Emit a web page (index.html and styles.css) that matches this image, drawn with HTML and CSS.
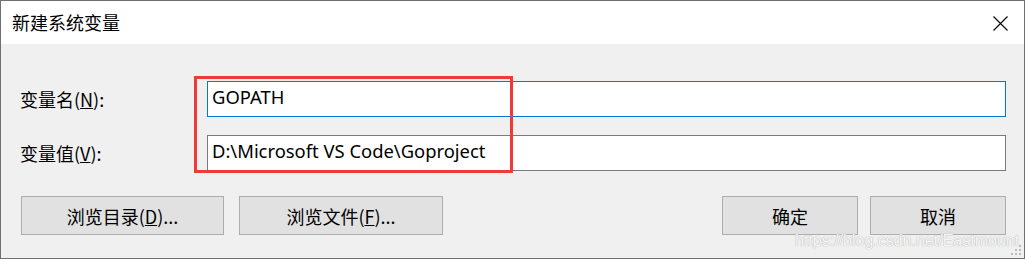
FILE: index.html
```html
<!DOCTYPE html>
<html lang="zh-CN">
<head>
    <meta charset="UTF-8">
    <title>新建系统变量</title>
    <link rel="stylesheet" href="styles.css">
</head>
<body>
    <div class="dialog">
        <div class="titlebar">
            <span class="titlebar__text">新建系统变量</span>
            <svg class="titlebar__close" width="15" height="15" viewBox="0 0 15 15">
                <path d="M0.5 0.5 L14.5 14.5 M14.5 0.5 L0.5 14.5" stroke="#000" stroke-width="1.1" fill="none"/>
            </svg>
        </div>
        <div class="content">
            <div class="form">
                <label class="form__label">变量名(<u>N</u>):</label>
                <div class="form__input form__input--focus">GOPATH</div>
                <label class="form__label">变量值(<u>V</u>):</label>
                <div class="form__input">D:\Microsoft VS Code\Goproject</div>
            </div>
            <div class="buttons">
                <button class="btn btn--wide">浏览目录(<u>D</u>)...</button>
                <button class="btn btn--wide btn--second">浏览文件(<u>F</u>)...</button>
                <button class="btn btn--ok">确定</button>
                <button class="btn btn--cancel">取消</button>
            </div>
        </div>
        <div class="highlight"></div>
        <div class="watermark">https://blog.csdn.net/Eastmount</div>
        <svg class="grip" width="11" height="11" viewBox="0 0 11 11">
            <rect x="8" y="0" width="2" height="2" fill="#bcbcbc"/>
            <rect x="4" y="4" width="2" height="2" fill="#bcbcbc"/>
            <rect x="8" y="4" width="2" height="2" fill="#bcbcbc"/>
            <rect x="0" y="8" width="2" height="2" fill="#bcbcbc"/>
            <rect x="4" y="8" width="2" height="2" fill="#bcbcbc"/>
            <rect x="8" y="8" width="2" height="2" fill="#bcbcbc"/>
        </svg>
    </div>
</body>
</html>
```

FILE: styles.css
```css
html,
body{
    margin: 0;
    padding: 0;
}
body{
    font-family: "Noto Sans", "Noto Sans CJK SC", sans-serif;
    color: #000;
}
.dialog{
    position: relative;
    width: 1025px;
    height: 259px;
    box-sizing: border-box;
    border: 1px solid #707070;
    background: #f0f0f0;
    overflow: hidden;
}
.titlebar{
    height: 43px;
    background: #fff;
    display: flex;
    align-items: center;
    justify-content: space-between;
    padding: 0 16px 0 11px;
}
.titlebar__text{
    font-family: "Noto Sans CJK SC", sans-serif;
    font-size: 18px;
    margin-top: -1px;
}
.titlebar__close{
    display: block;
    margin-top: 1px;
}
.content{
    padding: 37px 18px 0 19px;
}
.form{
    display: grid;
    grid-template-columns: 187px 1fr;
    row-gap: 18px;
    align-items: center;
}
.form__label{
    font-family: "Noto Sans CJK SC", sans-serif;
    font-size: 18px;
}
.form__input{
    height: 36px;
    box-sizing: border-box;
    border: 1px solid #7a7a7a;
    background: #fff;
    padding-left: 4px;
    font-size: 18.4px;
    line-height: 30px;
}
.form__input--focus{
    border-color: #0078d7;
}
.buttons{
    display: flex;
    margin-top: 25px;
    padding-left: 1px;
}
.btn{
    height: 39px;
    box-sizing: border-box;
    border: 1px solid #adadad;
    background: #e1e1e1;
    font-family: "Noto Sans CJK SC", sans-serif;
    font-size: 18px;
    color: #000;
    padding: 0;
}
.btn--wide{
    width: 203px;
}
.btn--second{
    width: 204px;
    margin-left: 15px;
}
.btn--ok{
    width: 136px;
    margin-left: auto;
}
.btn--cancel{
    width: 136px;
    margin-left: 12px;
}
.highlight{
    position: absolute;
    left: 193px;
    top: 75px;
    width: 319px;
    height: 97px;
    box-sizing: border-box;
    border: 3px solid #ef3a3a;
}
.watermark{
    position: absolute;
    left: 794px;
    top: 231px;
    white-space: nowrap;
    font-family: "Liberation Sans", sans-serif;
    font-size: 16px;
    color: #f6f6f6;
    text-shadow: 0 0 1px #b8b8b8, 0 0 1px #b8b8b8;
}
.grip{
    position: absolute;
    right: 2px;
    bottom: 2px;
}
```
